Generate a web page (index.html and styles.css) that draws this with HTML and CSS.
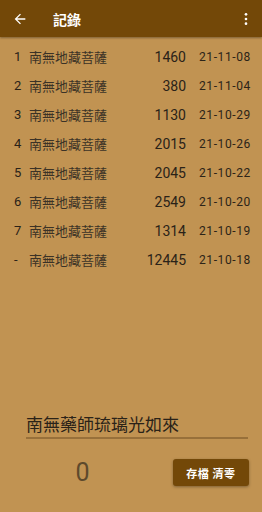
FILE: index.html
```html
<!DOCTYPE html>
<html>
<head>
<meta charset="utf-8">
<link rel="stylesheet" href="styles.css">
</head>
<body>
<div class="app">
  <header class="bar">
    <svg class="back" width="16" height="16" viewBox="0 0 24 24"><path d="M20 11H7.83l5.59-5.59L12 4l-8 8 8 8 1.41-1.41L7.83 13H20v-2z" fill="#fff"/></svg>
    <div class="title">記錄</div>
    <svg class="more" width="16" height="16" viewBox="0 0 24 24"><circle cx="12" cy="5" r="2" fill="#fff"/><circle cx="12" cy="12" r="2" fill="#fff"/><circle cx="12" cy="19" r="2" fill="#fff"/></svg>
  </header>
  <ul class="list">
    <li class="row"><span class="idx">1</span><span class="name">南無地藏菩薩</span><span class="cnt">1460</span><span class="date">21-11-08</span></li>
    <li class="row"><span class="idx">2</span><span class="name">南無地藏菩薩</span><span class="cnt">380</span><span class="date">21-11-04</span></li>
    <li class="row"><span class="idx">3</span><span class="name">南無地藏菩薩</span><span class="cnt">1130</span><span class="date">21-10-29</span></li>
    <li class="row"><span class="idx">4</span><span class="name">南無地藏菩薩</span><span class="cnt">2015</span><span class="date">21-10-26</span></li>
    <li class="row"><span class="idx">5</span><span class="name">南無地藏菩薩</span><span class="cnt">2045</span><span class="date">21-10-22</span></li>
    <li class="row"><span class="idx">6</span><span class="name">南無地藏菩薩</span><span class="cnt">2549</span><span class="date">21-10-20</span></li>
    <li class="row"><span class="idx">7</span><span class="name">南無地藏菩薩</span><span class="cnt">1314</span><span class="date">21-10-19</span></li>
    <li class="row"><span class="idx">-</span><span class="name">南無地藏菩薩</span><span class="cnt">12445</span><span class="date">21-10-18</span></li>
  </ul>
  <div class="bottom">
    <div class="field">南無藥師琉璃光如來</div>
    <div class="actions">
      <span class="zero">0</span>
      <button class="btn">存檔 清零</button>
    </div>
  </div>
</div>
</body>
</html>
```
FILE: styles.css
```css
html, body { margin: 0; padding: 0; }
body {
  width: 262px; height: 512px; overflow: hidden;
  background: #c19352;
  font-family: Roboto, "Noto Sans CJK TC", sans-serif;
}
.app { display: flex; flex-direction: column; height: 512px; }
.bar {
  height: 37px; background: #734808;
  display: flex; align-items: center;
  box-shadow: 0 1px 2px rgba(0,0,0,0.35);
  padding: 0 0 0 12px;
  position: relative;
}
.back { margin-top: 1px; }
.title {
  color: #fff; font-size: 14px; font-weight: bold;
  margin-left: 25px;
}
.more { margin-left: auto; margin-right: 8px; }
.list { list-style: none; margin: 0; padding: 5px 0 0 0; }
.row {
  height: 29px; display: flex; align-items: center;
  color: #2a2218; font-size: 13px;
}
.idx { width: 12px; margin-left: 14px; }
.name { width: 100px; margin-left: 3px; color: #3b3226; }
.cnt { width: 57px; text-align: right; font-size: 14px; }
.date { margin-left: 13px; font-size: 12px; letter-spacing: 0.6px; color: #2c2418; }
.bottom { margin-top: auto; padding: 0 13px 25px 26px; }
.field {
  font-size: 17px; color: #2a2218;
  padding-bottom: 1px;
  border-bottom: 2px solid #98703a;
  margin-right: 1px;
}
.actions { display: flex; align-items: center; margin-top: 19px; }
.zero {
  width: 175px; text-align: center; padding-right: 8px;
  font-size: 25px; color: #5e4a2c; box-sizing: border-box;
  margin-left: -26px;
}
.btn {
  margin-left: auto;
  background: #734808; color: #fff;
  border: none; border-radius: 3px;
  font-family: inherit; font-size: 11px; font-weight: bold;
  width: 77px; height: 27px;
  box-shadow: 0 1px 3px rgba(0,0,0,0.35);
  letter-spacing: 0.5px;
}
```
